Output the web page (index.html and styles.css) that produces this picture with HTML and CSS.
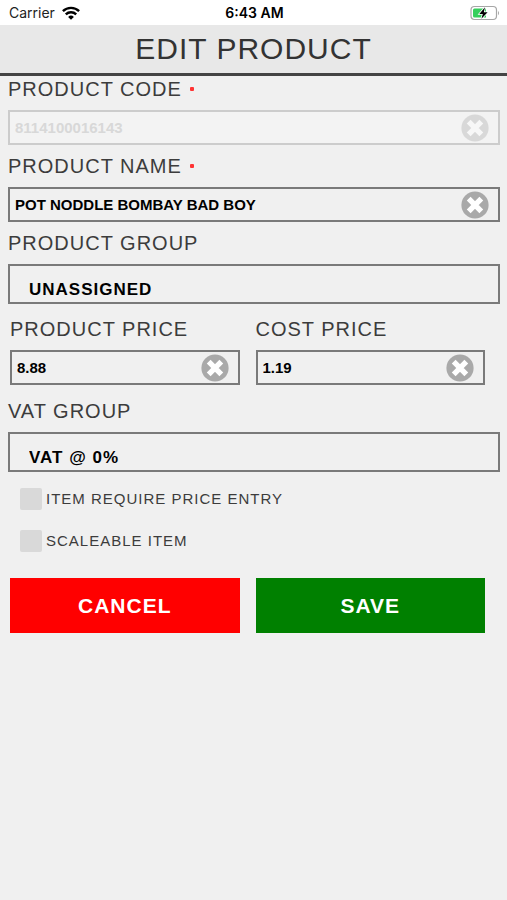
FILE: index.html
```html
<!DOCTYPE html>
<html lang="en">
<head>
<meta charset="utf-8">
<meta name="viewport" content="width=device-width, initial-scale=1">
<title>Edit Product</title>
<link rel="stylesheet" href="styles.css">
</head>
<body>
<svg class="defs" aria-hidden="true">
  <symbol id="clear" viewBox="0 0 28 28">
    <circle cx="14" cy="14" r="13.6" fill="#a9a9a9"/>
    <path d="M7.7 7.7 20.3 20.3M20.3 7.7 7.7 20.3" stroke="#fff" stroke-width="5.4"/>
  </symbol>
</svg>
<div class="status">
  <div class="carrier">
    <span>Carrier</span>
    <svg class="wifi" viewBox="0 0 18 14" fill="none" stroke="#000" stroke-width="2.4" aria-hidden="true">
      <path d="M.9 5.2a11.5 11.5 0 0 1 16.2 0"/>
      <path d="M3.8 8.4a7.4 7.4 0 0 1 10.4 0"/>
      <path d="M9 13.8 6.1 10.9a4.1 4.1 0 0 1 5.8 0Z" fill="#000" stroke="none"/>
    </svg>
  </div>
  <span class="time">6:43 AM</span>
  <svg class="battery" viewBox="0 0 30 16" aria-hidden="true">
    <rect x="1" y="1.500" width="25.5" height="13" rx="3.5" fill="#fff" stroke="#a6a6a6" stroke-width="1.2"/>
    <path d="M4.5 3.500H16V12.500H4.5Q3 12.500 3 11V5Q3 3.500 4.500 3.500Z" fill="#35cf5c"/>
    <path d="M28 5.700Q30 8 28 10.300Z" fill="#a6a6a6"/>
    <path d="M15 2.300 9.300 8.900H12.800L11.400 13.800 17.600 7.200H13.800Z" fill="#000" stroke="#fff" stroke-width="1.600" paint-order="stroke"/>
  </svg>
</div>
<header class="header"><h1>EDIT PRODUCT</h1></header>
<form class="form">
  <div class="field disabled">
    <label for="code">PRODUCT CODE<span class="required"></span></label>
    <div class="box">
      <input id="code" type="text" value="8114100016143" disabled>
      <button type="button" class="clear" aria-label="Clear" disabled><svg><use href="#clear"/></svg></button>
    </div>
  </div>
  <div class="field">
    <label for="name">PRODUCT NAME<span class="required"></span></label>
    <div class="box">
      <input id="name" type="text" value="POT NODDLE BOMBAY BAD BOY">
      <button type="button" class="clear" aria-label="Clear"><svg><use href="#clear"/></svg></button>
    </div>
  </div>
  <div class="field">
    <label for="group">PRODUCT GROUP</label>
    <select id="group"><option>UNASSIGNED</option></select>
  </div>
  <div class="columns prices">
    <div class="field">
      <label for="price">PRODUCT PRICE</label>
      <div class="box">
        <input id="price" type="text" value="8.88">
        <button type="button" class="clear" aria-label="Clear"><svg><use href="#clear"/></svg></button>
      </div>
    </div>
    <div class="field">
      <label for="cost">COST PRICE</label>
      <div class="box">
        <input id="cost" type="text" value="1.19">
        <button type="button" class="clear" aria-label="Clear"><svg><use href="#clear"/></svg></button>
      </div>
    </div>
  </div>
  <div class="field">
    <label for="vat">VAT GROUP</label>
    <select id="vat"><option>VAT @ 0%</option></select>
  </div>
  <div class="checks">
    <label><input type="checkbox">ITEM REQUIRE PRICE ENTRY</label>
    <label><input type="checkbox">SCALEABLE ITEM</label>
  </div>
  <div class="columns">
    <button type="button" class="action cancel">CANCEL</button>
    <button type="submit" class="action save">SAVE</button>
  </div>
</form>
</body>
</html>
```
FILE: styles.css
```css
* {
  box-sizing: border-box;
}

body {
  margin: 0;
  min-height: 100vh;
  background: #f0f0f0;
  color: #3c3c3c;
  font-family: "Liberation Sans", Arial, sans-serif;
}

.defs {
  position: absolute;
  width: 0;
  height: 0;
}

.status {
  display: grid;
  grid-template-columns: 1fr auto 1fr;
  align-items: center;
  height: 25px;
  padding: 0 7px 0 9px;
  background: #fff;
  color: #222;
  font: 14px Inter, sans-serif;
}

.carrier {
  display: flex;
  align-items: center;
  gap: 7px;
}

.wifi {
  width: 18px;
  height: 14px;
}

.time {
  color: #000;
  font-weight: 600;
}

.battery {
  justify-self: end;
  width: 30px;
  height: 16px;
}

.header {
  height: 51px;
  border-bottom: 3px solid #444;
  background: #e8e8e8;
}

h1 {
  margin: 0;
  color: #333;
  font-size: 30px;
  font-weight: 400;
  line-height: 48px;
  letter-spacing: 1px;
  text-align: center;
}

.form > .field {
  padding: 0 7px 8px 8px;
}

.field > label {
  display: flex;
  align-items: center;
  gap: 8px;
  margin-bottom: 8px;
  font-size: 20px;
  line-height: 26px;
  letter-spacing: 1px;
}

.required {
  width: 4px;
  height: 4px;
  border-radius: 1px;
  background: #f33;
}

.box {
  display: flex;
  align-items: center;
  height: 35px;
  padding: 0 9px 0 5px;
  border: 2px solid #7a7a7a;
}

.box input {
  flex: 1;
  min-width: 0;
  padding: 0;
  border: 0;
  background: none;
  color: #000;
  font: bold 15px "Liberation Sans", Arial, sans-serif;
}

.disabled .box {
  border-color: #ccc;
  background: #f3f3f3;
}

.disabled .box input {
  color: #d8d8d8;
}

.disabled .clear {
  opacity: 0.35;
}

.clear {
  padding: 0;
  border: 0;
  background: none;
}

.clear svg {
  display: block;
  width: 28px;
  height: 28px;
}

select {
  display: block;
  width: 100%;
  height: 40px;
  padding: 11px 19px 0;
  border: 2px solid #7a7a7a;
  border-radius: 0;
  appearance: none;
  background: none;
  color: #000;
  font: bold 17px "Liberation Sans", Arial, sans-serif;
  letter-spacing: 1px;
}

.columns {
  display: grid;
  grid-template-columns: repeat(2, minmax(0, 1fr));
  gap: 16px;
  padding: 0 22px 0 10px;
}

.prices {
  padding-top: 4px;
  padding-bottom: 13px;
}

.checks {
  display: grid;
  gap: 20px;
  padding: 8px 20px 26px;
}

.checks label {
  display: flex;
  align-items: center;
  gap: 4px;
  font-size: 15px;
  line-height: 22px;
  letter-spacing: 1px;
}

.checks input {
  width: 22px;
  height: 22px;
  margin: 0;
  border-radius: 2px;
  appearance: none;
  background: #d9d9d9;
}

.action {
  height: 55px;
  border: 0;
  color: #fff;
  font: bold 21px "Liberation Sans", Arial, sans-serif;
  letter-spacing: 1px;
}

.cancel {
  background: #f00;
}

.save {
  background: #008000;
}
```
